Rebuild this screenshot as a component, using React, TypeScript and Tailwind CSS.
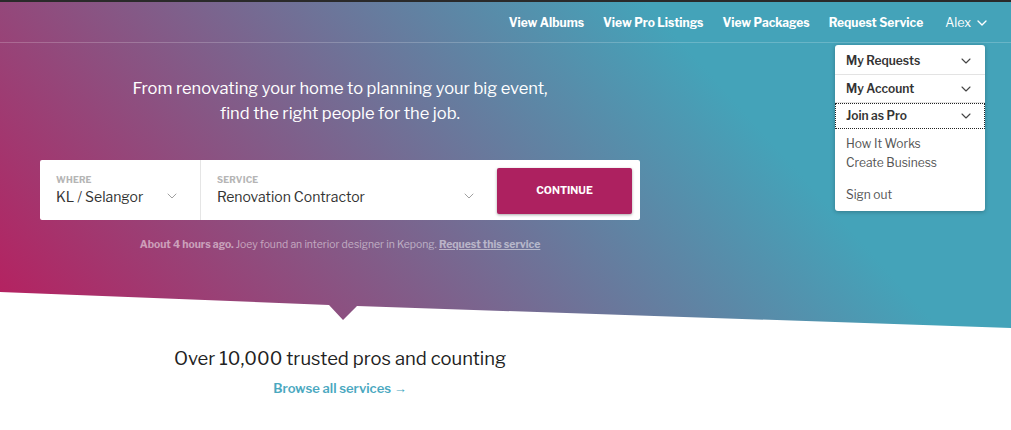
import { ChevronDown } from "lucide-react";

const font = { fontFamily: '"Libre Franklin", "Open Sans", sans-serif' };

function MenuRow({ label, focused, h }: { label: string; focused?: boolean; h: string }) {
  return (
    <div
      className={
        "flex items-center justify-between px-[11px] text-[12px] font-semibold text-[#333] " +
        h +
        (focused ? " outline outline-1 outline-dotted outline-[#222] -outline-offset-1" : " border-b border-[#e3e3e3]")
      }
    >
      <span>{label}</span>
      <ChevronDown className="h-4 w-4 text-[#444]" strokeWidth={1.6} />
    </div>
  );
}

export default function App() {
  return (
    <div className="relative h-[430px] w-full overflow-hidden bg-white" style={font}>
      <div className="h-[328px] border-t-2 border-[#2a2a2a] bg-[linear-gradient(48deg,#b81e5e_0%,#44a3b9_72%)] [clip-path:polygon(0_0,100%_0,100%_100%,357px_306px,343px_320px,329px_305px,0_292px)]">
        <nav className="flex h-[41px] items-center justify-end gap-[19px] border-b border-white/20 pr-[21px] pt-[2px] text-[12px] font-bold text-white">
          <a>View Albums</a>
          <a>View Pro Listings</a>
          <a>View Packages</a>
          <a>Request Service</a>
          <a className="ml-[3px] flex items-center gap-[3px] text-[12.5px] font-normal">
            Alex <ChevronDown className="h-4 w-4" strokeWidth={2} />
          </a>
        </nav>

        <div className="ml-[40px] w-[600px]">
          <h1 className="mt-[33px] text-center text-[16.5px] leading-[25px] text-white">
            From renovating your home to planning your big event,
            <br />
            find the right people for the job.
          </h1>

          <div className="mt-[34px] flex h-[60px] items-center rounded-[2px] bg-white">
            <div className="flex h-full w-[161px] items-center justify-between border-r border-[#e5e5e5] pl-[16px] pr-[20px]">
              <div>
                <div className="text-[9px] font-bold uppercase tracking-[0.02em] text-[#b5b5b5]">Where</div>
                <div className="text-[14px] leading-[21px] text-[#333]">KL / Selangor</div>
              </div>
              <ChevronDown className="mt-[12px] h-4 w-4 text-[#999]" strokeWidth={1.4} />
            </div>
            <div className="flex h-full flex-1 items-center justify-between pl-[16px] pr-[20px]">
              <div>
                <div className="text-[9px] font-bold uppercase tracking-[0.02em] text-[#b5b5b5]">Service</div>
                <div className="text-[14px] leading-[21px] text-[#333]">Renovation Contractor</div>
              </div>
              <ChevronDown className="mt-[12px] h-4 w-4 text-[#999]" strokeWidth={1.4} />
            </div>
            <button className="mr-[8px] mt-[2px] h-[46px] w-[135px] rounded-[2px] bg-[#ad2160] text-[10.5px] font-bold uppercase text-white shadow-[0_1px_3px_rgba(0,0,0,0.35)]">
              Continue
            </button>
          </div>

          <p className="mt-[17px] text-center text-[10.4px] text-white/50">
            <span className="font-bold">About 4 hours ago.</span> Joey found an interior designer in Kepong.{" "}
            <span className="font-bold underline">Request this service</span>
          </p>
        </div>
      </div>

      <div className="ml-[40px] w-[600px] pt-[18px] text-center">
        <h2 className="text-[18.4px] leading-[26px] text-[#222]">Over 10,000 trusted pros and counting</h2>
        <a className="mt-[7px] block text-[13px] font-semibold text-[#4aa8bf]">Browse all services →</a>
      </div>

      <div className="absolute left-[835px] top-[45px] w-[150px] rounded-[3px] bg-white pb-[7px] shadow-[0_1px_4px_rgba(0,0,0,0.25)]">
        <MenuRow label="My Requests" h="h-[30px] pt-[2px]" />
        <MenuRow label="My Account" h="h-[28px]" />
        <MenuRow label="Join as Pro" h="h-[26px]" focused />
        <div className="mt-[5px] px-[11px] text-[12px] leading-[19px] text-[#555]">
          <div>How It Works</div>
          <div>Create Business</div>
          <div className="mt-[13px]">Sign out</div>
        </div>
      </div>
    </div>
  );
}
